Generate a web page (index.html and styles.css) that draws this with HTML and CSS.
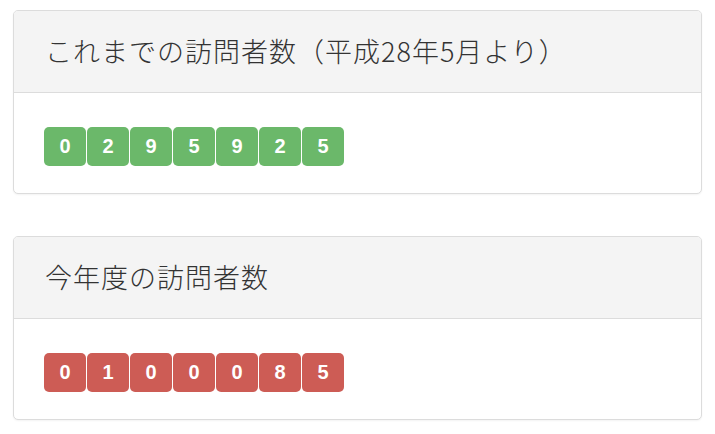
FILE: index.html
```html
<!DOCTYPE html>
<html lang="ja">
<head>
    <meta charset="UTF-8">
    <meta name="viewport" content="width=device-width, initial-scale=1.0">
    <title>訪問者数</title>
    <link rel="stylesheet" href="styles.css">
</head>
<body>
    <div class="container">
        <div class="panel">
            <div class="panel-heading">これまでの訪問者数（平成28年5月より）</div>
            <div class="panel-body">
                <div class="counter success">
                    <span class="digit">0</span><span class="digit">2</span><span class="digit">9</span><span class="digit">5</span><span class="digit">9</span><span class="digit">2</span><span class="digit">5</span>
                </div>
            </div>
        </div>

        <div class="panel">
            <div class="panel-heading">今年度の訪問者数</div>
            <div class="panel-body">
                <div class="counter danger">
                    <span class="digit">0</span><span class="digit">1</span><span class="digit">0</span><span class="digit">0</span><span class="digit">0</span><span class="digit">8</span><span class="digit">5</span>
                </div>
            </div>
        </div>
    </div>
</body>
</html>
```

FILE: styles.css
```css
body {
    margin: 0;
    padding: 10px 13px;
    background: #fff;
    font-family: "Noto Sans CJK JP", "Noto Sans", sans-serif;
    color: #333;
}

.container {
    display: flex;
    flex-direction: column;
    gap: 42px;
    width: 689px;
}

.panel {
    border: 1px solid #dcdcdc;
    border-radius: 5px;
    background: #fff;
    box-shadow: 0 1px 2px rgba(0,0,0,0.05);
    overflow: hidden;
}

.panel-heading {
    background: #f4f4f4;
    border-bottom: 1px solid #dcdcdc;
    height: 82px;
    padding: 0 31px 2px;
    display: flex;
    align-items: center;
    font-size: 27px;
    font-weight: 300;
    letter-spacing: 1px;
    box-sizing: border-box;
}

.panel-body {
    padding: 34px 30px 27px;
}

.counter {
    display: flex;
    gap: 1px;
}

.digit {
    width: 42px;
    height: 39px;
    border-radius: 5px;
    display: flex;
    align-items: center;
    justify-content: center;
    font-family: "Liberation Sans", Arial, sans-serif;
    font-weight: bold;
    font-size: 20px;
    color: #fff;
}

.success .digit {
    background: #6bb86a;
}

.danger .digit {
    background: #cd5c55;
}
```
